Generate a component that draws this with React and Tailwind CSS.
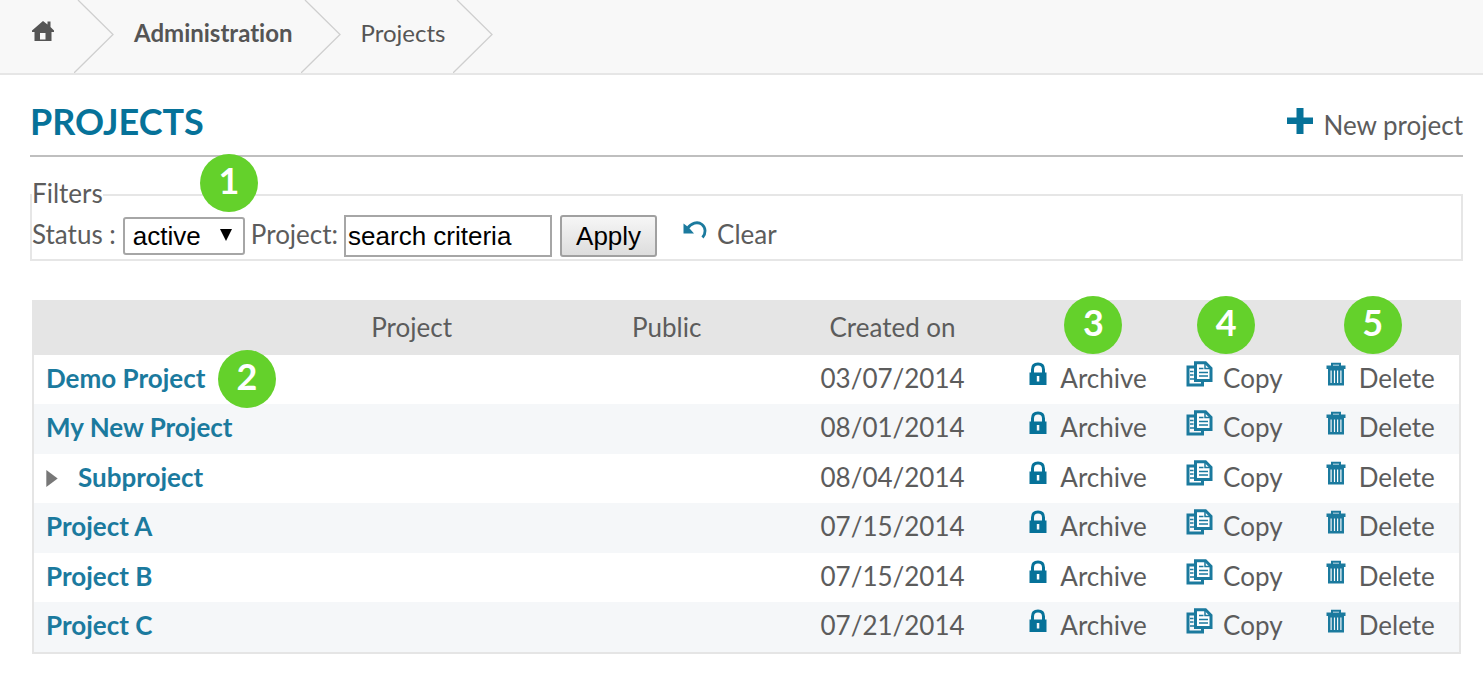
import React from "react";

const rows = [
  { name: "Demo Project", date: "03/07/2014", badge: 2 },
  { name: "My New Project", date: "08/01/2014" },
  { name: "Subproject", date: "08/04/2014", child: true },
  { name: "Project A", date: "07/15/2014" },
  { name: "Project B", date: "07/15/2014" },
  { name: "Project C", date: "07/21/2014" },
];

function HomeIcon() {
  return (
    <svg viewBox="0 0 22 22" className="h-[22px] w-[22px] fill-[#555555]" aria-hidden="true">
      <path fillRule="evenodd" d="M11 1 0 10.500V12h2.500v9h17v-9H22v-1.500L18.500 7V1.500h-3V4.500zM8 13h5.500v6.500H8z" />
    </svg>
  );
}

function Separator() {
  return (
    <svg viewBox="0 0 40 73" className="h-[73px] w-10 shrink-0 fill-none stroke-[#cfcfcf]" strokeWidth="1.3" aria-hidden="true">
      <path d="M4 0 39 34.500 0 73" />
    </svg>
  );
}

function PlusIcon() {
  return (
    <svg viewBox="0 0 26 26" className="h-[26px] w-[26px] fill-[#067299]" aria-hidden="true">
      <path d="M9.500 0h7v9.500H26v6.500h-9.500v10h-7V16H0V9.500h9.500z" />
    </svg>
  );
}

function UndoIcon() {
  return (
    <svg viewBox="0 0 24 20" className="h-5 w-6" aria-hidden="true">
      <path d="M4.500 8.500C8 3 14.500 1 19 4.500c4 3.500 4 9 .5 13" fill="none" stroke="#1b7a9e" strokeWidth="2.800" />
      <path d="M.5 3.500V13.500h10.500L7.500 9.500 4.500 6.500z" fill="#1b7a9e" />
    </svg>
  );
}

function LockIcon() {
  return (
    <svg viewBox="0 0 18 24" className="h-6 w-[18px]" aria-hidden="true">
      <path d="M3.500 12V7.500C3.500 3.500 6 2 9 2s5.500 1.500 5.500 5.500V12" fill="none" stroke="#067299" strokeWidth="3" />
      <path fillRule="evenodd" d="M.5 10.500h17V23H.5zM7.800 14v5.500h2.500V14z" fill="#067299" />
    </svg>
  );
}

function CopyIcon() {
  return (
    <svg viewBox="0 0 27 26" className="h-[26px] w-[27px] fill-none stroke-[#1b7a9e]" aria-hidden="true">
      <path d="M8.500 6H2v18h14.500v-4" strokeWidth="3" />
      <path d="M4 10.500h3.500M4 14h3.500M4 18h5" strokeWidth="1.300" />
      <path d="M9.500 1.800h10l5.500 5.500v12.200H9.500z" className="fill-white" strokeWidth="3" />
      <path d="M13 7.500h4.500M13 11.500h9M13 15h9" strokeWidth="1.500" />
      <path d="M19 1.500V7.500H25" strokeWidth="1.500" />
    </svg>
  );
}

function TrashIcon() {
  return (
    <svg viewBox="0 0 20 24" className="h-6 w-5" aria-hidden="true">
      <path d="M6 4V1.800h8V4" fill="none" stroke="#1b7a9e" strokeWidth="2" />
      <path d="M.5 3.500h19V7H.5z" fill="#1b7a9e" />
      <path fillRule="evenodd" d="M2 7h16v16.500H2zM4.500 8.500v12.500h1.200V8.500zM7.900 8.500v12.500h1.200V8.500zM11 8.500v12.500h1.200V8.500zM14.300 8.500v12.500h1.200V8.500z" fill="#1b7a9e" />
    </svg>
  );
}

function Badge({ n, className }) {
  return (
    <span className={`absolute z-10 flex h-[58px] w-[58px] justify-center rounded-full bg-[#64d12b] text-4xl leading-[52px] font-bold text-white ${className}`}>
      {n}
    </span>
  );
}

function Action({ icon, gap, children }) {
  return (
    <a href="#" className={`flex items-center ${gap}`}>
      <span className="pb-2">{icon}</span>
      {children}
    </a>
  );
}

export default function App() {
  return (
    <div className="min-h-screen bg-white font-['Lato','Noto_Sans',sans-serif] text-[26px] leading-8 text-[#5c5c5c] [font-variant-ligatures:none]">
      <nav aria-label="Breadcrumb" className="flex items-center border-b-2 border-[#e6e6e6] bg-[#f8f8f8] pl-8 text-2xl text-[#555555]">
        <a href="#" aria-label="Home" className="mr-5 pb-3">
          <HomeIcon />
        </a>
        <Separator />
        <a href="#" className="mx-5 pb-2 font-bold">Administration</a>
        <span className="-ml-3">
          <Separator />
        </span>
        <a href="#" className="mx-5 pb-2">Projects</a>
        <span className="-ml-3">
          <Separator />
        </span>
      </nav>

      <main className="pr-5 pl-[30px]">
        <header className="flex items-center justify-between border-b-2 border-[#bfbfbf] pt-6 pb-3">
          <h1 className="text-4xl leading-[44px] font-bold text-[#067299]">PROJECTS</h1>
          <a href="#" className="flex items-center gap-[10px] pt-2">
            <span className="pb-2">
              <PlusIcon />
            </span>
            New project
          </a>
        </header>

        <fieldset className="relative mt-5 border-2 border-[#e6e6e6] pt-[2px] pb-[2px]">
          <legend className="pb-1">Filters</legend>
          <Badge n={1} className="-top-[59px] left-[168px]" />
          <div className="flex items-center">
            <label htmlFor="status" className="mr-[7px] pb-1">Status :</label>
            <span className="relative mr-[6px] flex items-center">
              <select id="status" className="h-[38px] w-[122px] appearance-none rounded-[3px] border-2 border-[#a6a6a6] bg-white pl-2 font-['Liberation_Sans',sans-serif] text-black">
                <option>active</option>
              </select>
              <svg viewBox="0 0 12 12" className="pointer-events-none absolute top-3 right-[13px] h-3 w-3 fill-black" aria-hidden="true">
                <path d="M0 0h12L6 12z" />
              </svg>
            </span>
            <label htmlFor="project" className="mr-[6px] pb-1">Project:</label>
            <input id="project" type="text" defaultValue="search criteria" className="mr-2 h-[42px] w-[208px] border-2 border-[#a6a6a6] bg-white px-[2px] font-['Liberation_Sans',sans-serif] text-black" />
            <button type="button" className="mr-[26px] h-[42px] w-[97px] rounded-[3px] border-2 border-[#a0a0a0] bg-linear-to-b from-[#f6f6f6] to-[#dddddd] font-['Liberation_Sans',sans-serif] text-black">
              Apply
            </button>
            <a href="#" className="flex items-center gap-[10px] pb-1">
              <span className="pb-2">
                <UndoIcon />
              </span>
              Clear
            </a>
          </div>
        </fieldset>

        <div className="mt-[39px] mr-[2px] ml-[2px] border-2 border-[#e5e5e5]">
          <table className="w-full table-fixed border-collapse">
            <colgroup>
              <col className="w-[15.2%]" />
              <col className="w-[22.6%]" />
              <col className="w-[13.2%]" />
              <col className="w-[18.5%]" />
              <col className="w-[11%]" />
              <col className="w-[9.8%]" />
              <col className="w-[9.7%]" />
            </colgroup>
            <thead className="bg-[#e5e5e5]">
              <tr className="h-[53px]">
                <td />
                <th scope="col" className="pb-1 font-normal">Project</th>
                <th scope="col" className="pb-1 font-normal">Public</th>
                <th scope="col" className="pb-1 font-normal">Created on</th>
                <td className="relative"><Badge n={3} className="-top-[6px] left-10" /></td>
                <td className="relative"><Badge n={4} className="-top-[6px] left-4" /></td>
                <td className="relative"><Badge n={5} className="-top-[6px] left-[23px]" /></td>
              </tr>
            </thead>
            <tbody>
              {rows.map((row) => (
                <tr key={row.name} className="h-[49px] even:h-[50px] even:bg-[#f5f7f9]">
                  <td colSpan={2} className="pb-1 pl-3">
                    <div className="flex items-center">
                      {row.child && (
                        <svg viewBox="0 0 12 18" className="mt-1 mr-5 h-[17px] w-3 fill-[#777777]" aria-hidden="true">
                          <path d="M0 0 12 9 0 18z" />
                        </svg>
                      )}
                      <a href="#" className="relative font-bold text-[#1b7a9e]">
                        {row.name}
                        {row.badge && <Badge n={row.badge} className="-top-3 left-[172px]" />}
                      </a>
                    </div>
                  </td>
                  <td />
                  <td className="pb-1 text-center">{row.date}</td>
                  <td className="pb-1 pl-[5px]"><Action icon={<LockIcon />} gap="gap-[13px]">Archive</Action></td>
                  <td className="pb-1 pl-[5px]"><Action icon={<CopyIcon />} gap="gap-[10px]">Copy</Action></td>
                  <td className="pb-1 pl-[5px]"><Action icon={<TrashIcon />} gap="gap-[13px]">Delete</Action></td>
                </tr>
              ))}
            </tbody>
          </table>
        </div>
      </main>
    </div>
  );
}
